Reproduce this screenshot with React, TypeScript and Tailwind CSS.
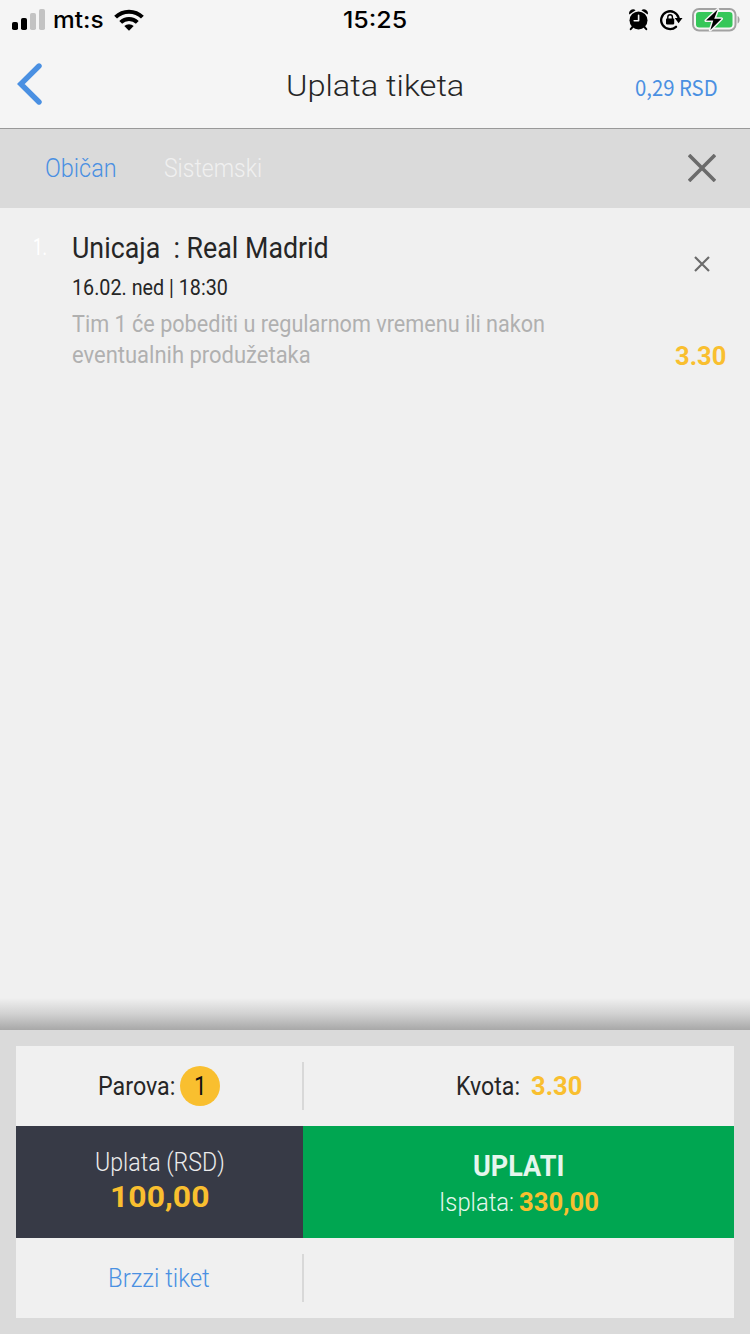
import { useLayoutEffect, useRef, useState } from "react";
import clsx from "clsx";

const matches = [
    {
        id: 1,
        home: "Unicaja",
        away: "Real Madrid",
        date: "16.02. ned | 18:30",
        tip: ["Tim 1 će pobediti u regularnom vremenu ili nakon", "eventualnih produžetaka"],
        odds: "3.30",
    },
];

type FitProps = { text: string; width: number; className?: string };

// One line of text squeezed horizontally to the given width
const Fit = ({ text, width, className }: FitProps) => {
    const ref = useRef<HTMLSpanElement>(null);
    const [scale, setScale] = useState(1);

    useLayoutEffect(() => {
        if (ref.current) setScale(width / ref.current.offsetWidth);
    }, [text, width]);

    return (
        <span className={clsx("block shrink-0 whitespace-pre", className)} style={{ width }}>
            <span ref={ref} className="block w-max origin-left" style={{ transform: `scaleX(${scale})` }}>
                {text}
            </span>
        </span>
    );
};

const SignalIcon = () => (
    <svg width="34" height="22" viewBox="0 0 34 22" className="shrink-0">
        <rect x="0" y="13" width="6" height="8" rx="1.8" />
        <rect x="9" y="9" width="6" height="12" rx="1.8" />
        <rect x="18" y="4" width="6" height="17" rx="1.8" fill="#c3c3c3" />
        <rect x="27" y="0" width="6" height="21" rx="1.8" fill="#c3c3c3" />
    </svg>
);

const WifiIcon = () => (
    <svg width="30" height="22" viewBox="0 0 30 22" fill="none" stroke="#000" strokeWidth="4" className="shrink-0">
        <path d="M1.6 8.2a19 19 0 0 1 26.8 0" />
        <path d="M6.7 13.4a11.8 11.8 0 0 1 16.6 0" />
        <path d="M10.3 17.1a6.7 6.7 0 0 1 9.4 0L15 21.8z" fill="#000" stroke="none" />
    </svg>
);

const AlarmIcon = () => (
    <svg width="20" height="22" viewBox="0 0 20 22" className="shrink-0">
        <circle cx="9.5" cy="11.4" r="9" />
        <path d="M.3 5.6A4 4 0 0 1 6.600 1.2zM18.7 5.6A4 4 0 0 0 12.4 1.2z" />
        <path d="M4 17.5l-2.3 2.7M15 17.5l2.3 2.7" stroke="#000" strokeWidth="2" strokeLinecap="round" />
        <path d="M9.6 6.2v5.6H5.2" stroke="#f5f5f5" strokeWidth="1.6" fill="none" strokeLinecap="round" strokeLinejoin="round" />
    </svg>
);

const RotationLockIcon = () => (
    <svg width="23" height="22" viewBox="0 0 23 22" className="shrink-0">
        <path d="M16 17.8A8.9 8.9 0 1 1 18.7 9" stroke="#000" strokeWidth="2.3" fill="none" strokeLinecap="round" />
        <path d="M14.7 9h7.8l-3.9 5.2z" />
        <rect x="6" y="9.4" width="8.2" height="6" rx=".8" />
        <path d="M7.8 10V8.1a2.3 2.3 0 0 1 4.6 0V10" stroke="#000" strokeWidth="1.4" fill="none" />
    </svg>
);

const BatteryIcon = () => (
    <svg width="49" height="24" viewBox="0 0 49 24" className="shrink-0">
        <rect x="1" y="1" width="42.5" height="21.5" rx="6" fill="none" stroke="#a2a2a2" strokeWidth="2" />
        <path d="M45.6 8c2.6 1 2.6 6.5 0 7.6z" fill="#a2a2a2" />
        <rect x="4" y="4" width="36.5" height="15.5" rx="3.2" fill="#35c759" />
        <path
            d="M25.7 1.5L14 12.6h7.3L18.3 22 29.5 10.7h-7.3z"
            stroke="#f5f5f5"
            strokeWidth="3"
            strokeLinejoin="round"
        />
        <path d="M25.7 1.5L14 12.6h7.3L18.3 22 29.5 10.7h-7.3z" />
    </svg>
);

const CrossIcon = ({ size, stroke }: { size: number; stroke: number }) => (
    <svg width={size} height={size} viewBox={`0 0 ${size} ${size}`} className="shrink-0">
        <path
            d={`M1 1L${size - 1} ${size - 1}M${size - 1} 1L1 ${size - 1}`}
            stroke="#6b6b6b"
            strokeWidth={stroke}
        />
    </svg>
);

const StatusBar = () => (
    <div className="grid h-10 grid-cols-3 items-center pl-3 pr-[9px] font-['Inter',sans-serif] text-[23px] leading-10 font-medium text-black">
        <div className="flex items-center">
            <SignalIcon />
            <Fit text="mt:s" width={51} className="ml-[7px]" />
            <div className="ml-[10px]">
                <WifiIcon />
            </div>
        </div>
        <div className="flex justify-center">
            <Fit text="15:25" width={64} className="mr-[3px]" />
        </div>
        <div className="flex items-center justify-end">
            <AlarmIcon />
            <div className="ml-[11px] mr-[9px]">
                <RotationLockIcon />
            </div>
            <BatteryIcon />
        </div>
    </div>
);

const Header = () => (
    <header className="grid h-[89px] grid-cols-[1fr_178px_1fr] items-center border-b border-[#999] px-8">
        <svg width="26" height="44" viewBox="0 0 26 44" fill="none" className="-ml-[15px] shrink-0">
            <path d="M22 4L3.8 22 22 40" stroke="#4a90e2" strokeWidth="5.4" strokeLinecap="round" />
        </svg>
        <Fit text="Uplata tiketa" width={178} className="pt-1 text-[30px] leading-10 font-[350]" />
        <Fit
            text="0,29 RSD"
            width={83}
            className="justify-self-end pt-1 font-['Noto_Sans_CJK_SC',sans-serif] text-[22px] leading-8 text-[#4a90e2]"
        />
    </header>
);

const App = () => {
    return (
        <div className="flex h-[1334px] w-[750px] flex-col overflow-hidden bg-[#f5f5f5] font-['Roboto',sans-serif] text-[#262626]">
            <StatusBar />
            <Header />

            <nav className="flex h-[79px] items-center bg-[#dadada] pb-0.5 pl-[45px] pr-[34px] text-[26px] leading-8 font-[350]">
                <Fit text="Običan" width={72} className="text-[#4a90e2]" />
                <Fit text="Sistemski" width={98} className="ml-[47px] text-[#f0f0f0]" />
                <div className="ml-auto">
                    <CrossIcon size={28} stroke={3.6} />
                </div>
            </nav>

            <main className="flex flex-1 flex-col bg-[#f0f0f0]">
                {matches.map((match) => (
                    <div key={match.id} className="flex pt-5 pl-[33px] pr-[25px]">
                        <div className="w-[39px] pt-1 text-[23px] leading-8 text-white">
                            <Fit text={`${match.id}.`} width={14} />
                        </div>
                        <div className="flex-1">
                            <Fit text={`${match.home}  : ${match.away}`} width={257} className="text-[30px] leading-10" />
                            <Fit text={match.date} width={156} className="mt-1 text-[22px] leading-8" />
                            <div className="mt-[5px] text-[24px] leading-[31px] text-[#b0b0b0]">
                                <Fit text={match.tip[0]} width={473} />
                                <Fit text={match.tip[1]} width={239} />
                            </div>
                        </div>
                        <div className="flex flex-col items-end justify-between pt-7">
                            <div className="mr-[15px]">
                                <CrossIcon size={16} stroke={2.2} />
                            </div>
                            <Fit text={match.odds} width={51} className="-mr-px -mb-px text-[26px] leading-8 font-bold text-[#f9bf2f]" />
                        </div>
                    </div>
                ))}
                <div className="mt-auto h-8 bg-linear-to-b from-[#f0f0f0] via-[#d1d1d1] to-[#a8a8a8]" />
            </main>

            <footer className="h-[304px] bg-[#dadada] p-4 text-[26px] leading-8">
                <div className="grid h-full grid-cols-[287px_431px] grid-rows-[80px_112px_80px] bg-[#f0f0f0]">
                    <div className="relative flex items-center justify-center gap-[5px] pr-px">
                        <Fit text="Parova:" width={77} />
                        <span className="flex size-10 items-center justify-center rounded-full bg-[#f9bf2f] text-[#111]">
                            <Fit text="1" width={13} />
                        </span>
                        <span className="absolute top-4 -right-px h-12 w-0.5 bg-[#d8d8d8]" />
                    </div>
                    <div className="flex items-center justify-center gap-[11px]">
                        <Fit text="Kvota:" width={64} />
                        <Fit text={matches[0].odds} width={51} className="font-bold text-[#f9bf2f]" />
                    </div>

                    <div className="flex flex-col items-center bg-[#373a46] pt-5">
                        <Fit text="Uplata (RSD)" width={130} className="font-[350] text-[#ececec]" />
                        <Fit text="100,00" width={99} className="mt-[3px] text-[30px] font-bold text-[#f9bf2f]" />
                    </div>
                    <div className="flex flex-col items-center bg-[#00a651] pt-6">
                        <Fit text="UPLATI" width={91} className="text-[30px] font-bold text-[#e5f6ed]" />
                        <div className="mt-1 flex gap-[5px]">
                            <Fit text="Isplata:" width={75} className="font-[350] text-[#e5f6ed]" />
                            <Fit text="330,00" width={80} className="font-bold text-[#f9bf2f]" />
                        </div>
                    </div>

                    <div className="relative flex items-center justify-center pr-px font-[350] text-[#4a90e2]">
                        <Fit text="Brzzi tiket" width={102} />
                        <span className="absolute top-4 -right-px h-12 w-0.5 bg-[#d8d8d8]" />
                    </div>
                </div>
            </footer>
        </div>
    );
};

export default App;
